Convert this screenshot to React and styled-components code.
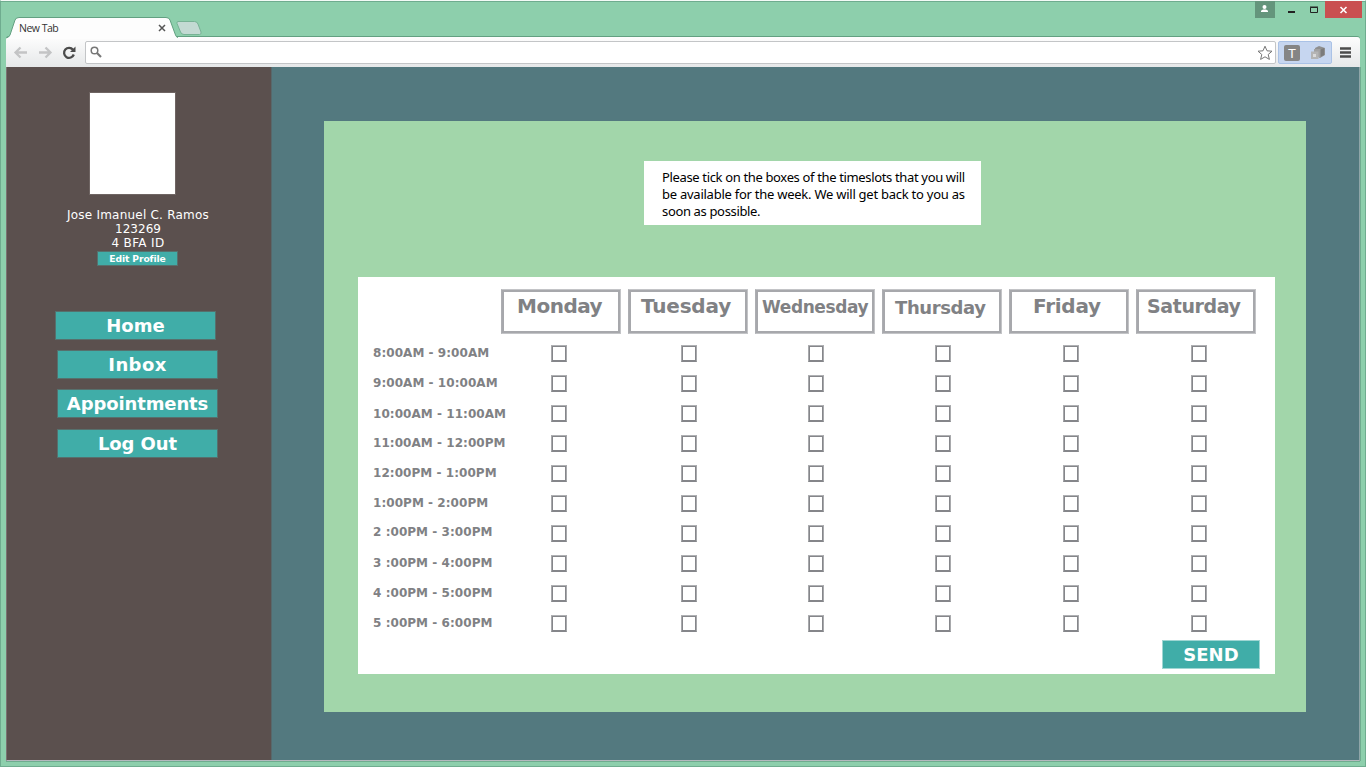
import React from "react";
import styled, { createGlobalStyle } from "styled-components";

const TEAL = "#40ada8";
const BOLD = `"DejaVu Sans", Verdana, sans-serif`;

const Global = createGlobalStyle`
  * { box-sizing: border-box; }
  html, body { margin: 0; padding: 0; overflow: hidden; background: #fff; }
  body { font-family: ${BOLD}; }
  button { font-family: inherit; cursor: pointer; }
`;

const Window = styled.div`
  width: 1366px;
  height: 767px;
  display: flex;
  flex-direction: column;
  background: #8dcfac;
  border: 1px solid #6fac8f;
  border-top-color: #f4fbf7;
  box-shadow: inset 0 1px 0 #6fac8f;
`;

const TitleBar = styled.header`
  height: 36px;
  flex: none;
  display: flex;
  justify-content: space-between;
  padding: 0 3px 0 5px;
`;

const Tabs = styled.div`
  display: flex;
  padding-top: 16px;
`;

const Tab = styled.div`
  position: relative;
  z-index: 1;
  width: 171px;
  height: 21px;
  display: flex;
  align-items: center;
  justify-content: space-between;
  padding: 1px 11px 0 13px;
  font: 10.5px/20px "Open Sans", "Segoe UI", sans-serif;
  letter-spacing: -0.5px;
  color: #333;
`;

const TabShape = styled.svg`
  position: absolute;
  left: 0;
  top: 0;
  z-index: -1;
`;

const NewTab = styled.svg`
  margin: 4px 0 0 -3px;
`;

const WindowButtons = styled.div`
  display: flex;
  height: 17px;
`;

const WindowButton = styled.div`
  width: ${(p) => p.$w}px;
  height: 17px;
  background: ${(p) => p.$bg || "transparent"};
  svg { display: block; }
`;

const Toolbar = styled.div`
  height: 30px;
  flex: none;
  margin: 0 5px;
  display: flex;
  align-items: center;
  padding: 1px 0 0 0;
  background: linear-gradient(#fdfdfd, #e6e8e9);
  box-shadow: 0 -1px 0 #62a081;
  border-radius: 3px 3px 0 0;
`;

const NavIcons = styled.svg`
  flex: none;
`;

const AddressBar = styled.div`
  width: 1191px;
  height: 23px;
  display: flex;
  align-items: center;
  justify-content: space-between;
  padding: 0 2px 0 4px;
  background: #fff;
  border: 1px solid #c3c5c7;
  border-radius: 2px;
`;

const Extensions = styled.div`
  width: 54px;
  height: 23px;
  margin: 0 6px 0 2px;
  display: flex;
  align-items: center;
  background: #c6d6f0;
  border: 1px solid #aac2e6;
  border-radius: 2px;
`;

const ExtensionTile = styled.div`
  width: 16px;
  height: 16px;
  margin: 0 10px 0 5px;
  border-radius: 2px;
  background: #858585;
  color: #fff;
  text-align: center;
  font: 13px/17px "Liberation Sans", sans-serif;
`;

const Page = styled.div`
  flex: none;
  height: 694px;
  margin: 0 5px;
  display: flex;
  border-bottom: 1px solid #b5b9bf;
  border-right: 1px solid #8fa5a8;
  border-left: 1px solid #7a7271;
  box-shadow: 0 1px 0 #6fac8f, 1px 0 0 #6fac8f;
`;

const Sidebar = styled.aside`
  width: 265px;
  flex: none;
  display: flex;
  flex-direction: column;
  background: #5b504e;
  border-right: 1px solid #57686b;
  color: #fff;
`;

const Avatar = styled.div`
  width: 85px;
  height: 101px;
  margin: 26px 0 0 83px;
  background: #fff;
  box-shadow: 0 0 0 1px #6f6563;
`;

const Profile = styled.div`
  width: 160px;
  margin: 14px 0 0 51px;
  text-align: center;
  font-size: 12px;
  line-height: 14px;
`;

const ProfileLine = styled.div`
  letter-spacing: ${(p) => p.$ls || 0}px;
`;

const Button = styled.button`
  display: block;
  flex: none;
  width: ${(p) => p.$w}px;
  height: ${(p) => p.$h}px;
  margin: ${(p) => p.$m || 0};
  padding: 0;
  border: 1px solid ${(p) => p.$edge || "#56706d"};
  background: ${TEAL};
  color: #fff;
  font-weight: bold;
  font-size: ${(p) => p.$size || 18}px;
  line-height: ${(p) => p.$h - 2}px;
  letter-spacing: ${(p) => p.$ls || 0}px;
`;

const Nav = styled.nav`
  display: flex;
  flex-direction: column;
  margin-top: 45px;
`;

const Main = styled.main`
  flex: 1;
  background: #53797f;
  padding: 54px 0 0 52px;
`;

const Panel = styled.section`
  width: 982px;
  height: 591px;
  padding: 40px 0 0 34px;
  background: #a2d6aa;
`;

const Notice = styled.p`
  width: 337px;
  height: 64px;
  margin: 0 0 52px 286px;
  padding: 8px 0 0 18px;
  background: #fff;
  color: #000;
  font: 13px/17px "Noto Sans", "Myriad Pro", sans-serif;
`;

const NoticeLine = styled.span`
  display: block;
  white-space: nowrap;
  letter-spacing: ${(p) => p.$ls}px;
`;

const Card = styled.div`
  width: 917px;
  height: 397px;
  padding: 12px 0 0 15px;
  background: #fff;
  color: #808184;
  font-weight: bold;
`;

const Days = styled.div`
  display: flex;
  gap: 7px;
  padding-left: 128px;
  margin-bottom: 11px;
`;

const Day = styled.div`
  width: 120px;
  height: 45px;
  flex: none;
  border: 1px solid;
  border-color: #c3c4c7 #c3c4c7 #c3c4c7 #adaeb2;
  box-shadow: inset 0 0 0 2px #a7a8ac;
  padding: ${(p) => p.$top + 2}px 0 0 ${(p) => p.$left + 2}px;
  font-size: ${(p) => p.$size}px;
  line-height: 24px;
  letter-spacing: ${(p) => p.$ls}px;
  white-space: nowrap;
`;

const Slot = styled.div`
  display: grid;
  grid-template-columns: 178px 130px 127px 127px 128px 128px 16px;
  height: 30px;
  align-items: start;
`;

const SlotLabel = styled.span`
  font-size: 12px;
  line-height: 14px;
  letter-spacing: 0.05px;
  margin-top: ${(p) => 1 + (p.$shift || 0)}px;
  white-space: nowrap;
`;

const Box = styled.input`
  appearance: none;
  width: 16px;
  height: 17px;
  margin: 0;
  border: 1px solid;
  border-color: #b0b1b4 #a8a9ac #85868a #a8a9ac;
  box-shadow: inset 0 0 0 1px #85868a;
  border-radius: 0;
  background: #fff;
`;

const days = [
  ["Monday", 20, 13, 2, -0.5],
  ["Tuesday", 20, 10, 2, -0.2],
  ["Wednesday", 17, 4, 3, -0.4],
  ["Thursday", 18, 10, 4, -0.4],
  ["Friday", 20, 21, 2, -0.25],
  ["Saturday", 19, 8, 2, -0.4],
];

const slots = [
  ["8:00AM - 9:00AM"],
  ["9:00AM - 10:00AM"],
  ["10:00AM - 11:00AM", 1],
  ["11:00AM - 12:00PM"],
  ["12:00PM - 1:00PM"],
  ["1:00PM - 2:00PM"],
  ["2 :00PM - 3:00PM", -1],
  ["3 :00PM - 4:00PM"],
  ["4 :00PM - 5:00PM"],
  ["5 :00PM - 6:00PM"],
];

export default function App() {
  return (
    <Window>
      <Global />
      <TitleBar>
        <Tabs>
          <Tab>
            <TabShape width="172" height="23">
              <path d="M0 22 L0 21 Q3 20.500 4 18 L9 3 Q10 .5 13 .5 L160 .5 Q163 .5 164 3 L169.500 18 Q170.500 20.500 172 21 L172 22 Z" fill="#fdfdfd" />
              <path d="M0 21 Q3 20.500 4 18 L9 3 Q10 .5 13 .5 L160 .5 Q163 .5 164 3 L169.500 18 Q170.500 20.500 172 20.500" fill="none" stroke="#62a081" />
            </TabShape>
            <span>New Tab</span>
            <svg width="8" height="8"><path d="M1 1l6 6M7 1L1 7" stroke="#555" strokeWidth="1.500" /></svg>
          </Tab>
          <NewTab width="28" height="15">
            <path d="M4 .5 H20.500 Q23 .5 24 3 L27 11 Q27.500 13.500 25.500 13.500 H10 Q7.500 13.500 6.500 11 L3 2.500 Q2.500 .5 4 .5Z" fill="#c3dad3" stroke="#77b295" />
          </NewTab>
        </Tabs>
        <WindowButtons>
          <WindowButton $w={20} $bg="#64957c">
            <svg width="20" height="17"><circle cx="9.500" cy="6" r="2" fill="#fff" /><path d="M6 11V9.800L8 8.500h3l2 1.300V11z" fill="#fff" /></svg>
          </WindowButton>
          <WindowButton $w={50}>
            <svg width="50" height="17"><path d="M13 10h7v2h-7z" fill="#222" /><path d="M35.500 6.500h7v5h-7zM35 6h8" fill="none" stroke="#222" /></svg>
          </WindowButton>
          <WindowButton $w={37} $bg="#c95050">
            <svg width="37" height="17"><path d="M15.500 6l6 6M21.500 6l-6 6" stroke="#fff" strokeWidth="1.600" /></svg>
          </WindowButton>
        </WindowButtons>
      </TitleBar>

      <Toolbar>
        <NavIcons width="79" height="28">
          <g fill="none" stroke="#c3c4c5" strokeWidth="2.300">
            <path d="M21 13.500H10M14.500 8.500L9.500 13.500l5 5" />
            <path d="M33 13.500h11M39.500 8.500l5 5-5 5" />
          </g>
          <path d="M67 10.700A5 5 0 1 0 67.800 15.500" fill="none" stroke="#4b4b4b" strokeWidth="2.300" />
          <path d="M69.500 7.500v5.500H64z" fill="#4b4b4b" />
        </NavIcons>
        <AddressBar>
          <svg width="13" height="13"><circle cx="4.500" cy="4.500" r="3.300" fill="none" stroke="#777" strokeWidth="1.500" /><path d="M7 7l4 4" stroke="#777" strokeWidth="2.200" /></svg>
          <svg width="16" height="16"><path d="M8 1.200l2 4.600 5 .4-3.800 3.300 1.200 4.900L8 11.800l-4.400 2.600 1.200-4.900L1 6.200l5-.4z" fill="#fff" stroke="#777" /></svg>
        </AddressBar>
        <Extensions>
          <ExtensionTile>T</ExtensionTile>
          <svg width="17" height="16">
            <path d="M5 3l4-2 6 2v7l-5 3-4-2z" fill="#8f8f8f" />
            <path d="M9.500 5l4.500-2v7l-4 2z" fill="#7b7b7b" />
            <path d="M4 4h6.500v8H4z" fill="#a2a2a2" />
            <path d="M1 6.500h7.500V14H1z" fill="#b4b4b4" />
            <path d="M3 9h3v3h-3z" fill="#dadada" />
          </svg>
        </Extensions>
        <svg width="14" height="14"><path d="M2 2.500h11M2 6.500h11M2 10.500h11" stroke="#4c4c4c" strokeWidth="2.400" /></svg>
      </Toolbar>

      <Page>
        <Sidebar>
          <Avatar />
          <Profile>
            <ProfileLine $ls={0.22}>Jose Imanuel C. Ramos</ProfileLine>
            <ProfileLine>123269</ProfileLine>
            <ProfileLine $ls={0.35}>4 BFA ID</ProfileLine>
            <Button $w={81} $h={15} $size={9.2} $m="1px 0 0 39px" $ls={-0.1}>Edit Profile</Button>
          </Profile>
          <Nav>
            <Button $w={161} $h={29} $m="0 0 0 48px">Home</Button>
            <Button $w={161} $h={29} $m="10px 0 0 50px" $ls={0.4}>Inbox</Button>
            <Button $w={161} $h={29} $m="10px 0 0 50px" $ls={-0.12}>Appointments</Button>
            <Button $w={161} $h={29} $m="11px 0 0 50px" $ls={-0.1}>Log Out</Button>
          </Nav>
        </Sidebar>
        <Main>
          <Panel>
            <Notice>
              <NoticeLine $ls={-0.35}>Please tick on the boxes of the timeslots that you will</NoticeLine>
              <NoticeLine $ls={-0.25}>be available for the week. We will get back to you as</NoticeLine>
              <NoticeLine $ls={-0.35}>soon as possible.</NoticeLine>
            </Notice>
            <Card>
              <Days>
                {days.map(([name, size, left, top, ls]) => (
                  <Day key={name} $size={size} $left={left} $top={top} $ls={ls}>{name}</Day>
                ))}
              </Days>
              {slots.map(([label, shift]) => (
                <Slot key={label}>
                  <SlotLabel $shift={shift}>{label}</SlotLabel>
                  {days.map(([name]) => (
                    <Box key={name} type="checkbox" aria-label={`${name} ${label}`} />
                  ))}
                </Slot>
              ))}
              <Button $w={98} $h={29} $m="-5px 0 0 789px" $edge="#9fd6d3">SEND</Button>
            </Card>
          </Panel>
        </Main>
      </Page>
    </Window>
  );
}
